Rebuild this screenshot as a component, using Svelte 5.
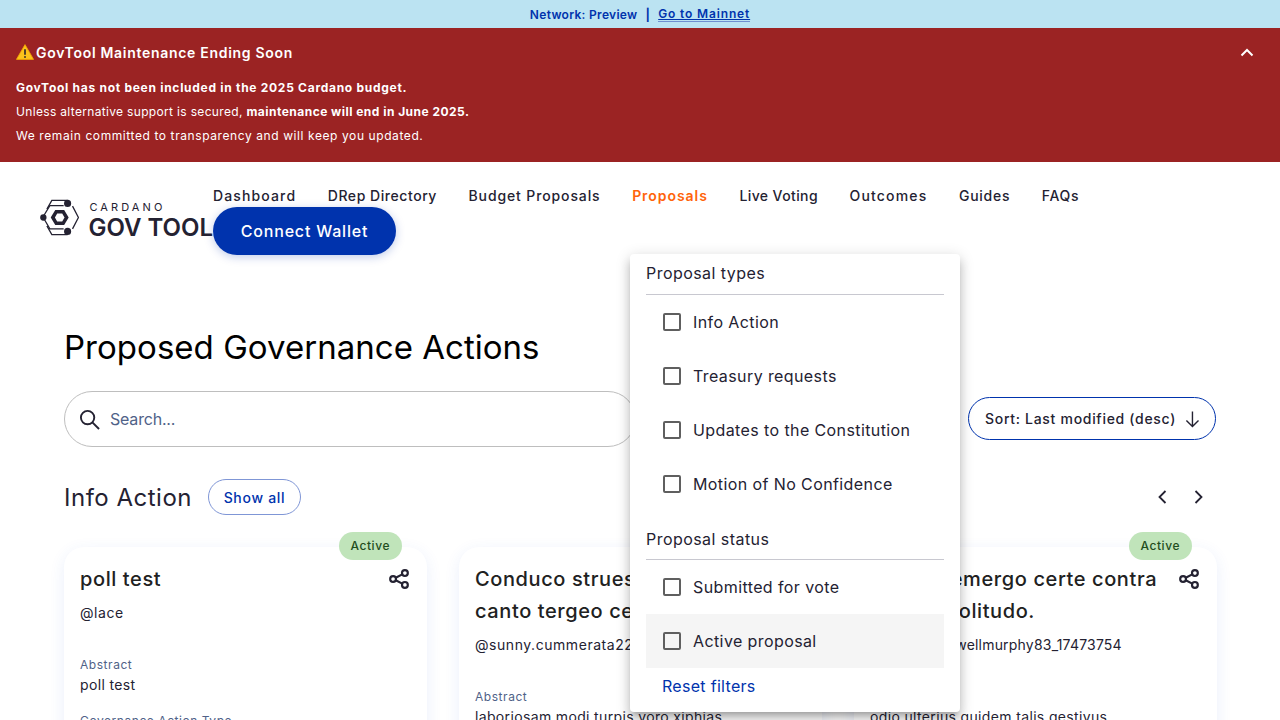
<script lang="ts">
	// tracking evens out the width gap between Inter and the original typeface
	const navLinks = [
		{ label: 'Dashboard', tracking: 1.13 },
		{ label: 'DRep Directory', tracking: 0.55 },
		{ label: 'Budget Proposals', tracking: 0.88 },
		{ label: 'Proposals', tracking: 0.95 },
		{ label: 'Live Voting', tracking: 0.4 },
		{ label: 'Outcomes', tracking: 1.15 },
		{ label: 'Guides', tracking: 0.75 },
		{ label: 'FAQs', tracking: 0.65 }
	];
	const typeFilters = ['Info Action', 'Treasury requests', 'Updates to the Constitution', 'Motion of No Confidence'];
	const statusFilters = ['Submitted for vote', 'Active proposal'];

	const cards = [
		{ title: ['poll test'], author: '@lace', authorTracking: 0.55, abstract: 'poll test', badge: true },
		{ title: ['Conduco strues tempus', 'canto tergeo cena'], author: '@sunny.cummerata22_17473754', authorTracking: 0.55, abstract: 'laboriosam modi turpis voro xiphias', badge: false },
		{ title: ['Vicinus emergo certe contra', 'Amoris solitudo.'], author: '@arden.maxwellmurphy83_17473754', authorTracking: 0.2, abstract: 'odio ulterius quidem talis gestivus', badge: true }
	];
</script>

<div class="page">
	<div class="network">
		<span>Network: Preview</span>
		<span class="sep">|</span>
		<a href="#mainnet">Go to Mainnet</a>
	</div>

	<section class="notice">
		<div class="notice-head">
			<h2>
				<svg class="warn" viewBox="0 0 18 16" width="18" height="16" aria-hidden="true">
					<path d="M9 .6 17.6 15.4H.4Z" fill="#fcc21b" stroke="#f2a600" stroke-width=".8" stroke-linejoin="round" />
					<rect x="8.1" y="5" width="1.8" height="6" rx=".9" fill="#40342a" />
					<circle cx="9" cy="13" r="1" fill="#40342a" />
				</svg>
				GovTool Maintenance Ending Soon
			</h2>
			<svg viewBox="0 0 14 9" width="14" height="9" fill="none" stroke="#fff" stroke-width="2" aria-hidden="true">
				<path d="M1.5 7.5 7 2l5.5 5.5" />
			</svg>
		</div>
		<p class="lead"><b>GovTool has not been included in the 2025 Cardano budget.</b></p>
		<p>Unless alternative support is secured, <b>maintenance will end in June 2025.</b></p>
		<p class="last">We remain committed to transparency and will keep you updated.</p>
	</section>

	<header>
		<div class="logo">
			<svg viewBox="0 0 40 37" width="40" height="37" fill="none" stroke="#242232" aria-hidden="true">
				<path d="M7 10 12 1.2H28M33 7 39 18.5 33 30M28 35.8H12L7 27" stroke-width="1.3" />
				<path d="M3 18 10 6.5H24M3 18 10 30H24" stroke-width="1.3" />
				<path d="M13 18.5 16.5 12.6h7l3.5 5.9-3.5 5.9h-7Z" stroke="#fff" stroke-width="7" />
				<path d="M13 18.5 16.5 12.6h7l3.5 5.9-3.5 5.9h-7Z" stroke-width="3.6" />
				<circle cx="28" cy="4.2" r="3.6" fill="#242232" stroke="none" />
				<circle cx="3.4" cy="18.5" r="3.2" fill="#242232" stroke="none" />
				<circle cx="28" cy="32.6" r="3.6" fill="#242232" stroke="none" />
			</svg>
			<div class="wordmark">
				<span class="small">CARDANO</span>
				<span class="big">GOV TOOL</span>
			</div>
		</div>
		<nav>
			{#each navLinks as link}
				<a href="#nav" class:active={link.label === 'Proposals'} style:letter-spacing="{link.tracking}px">{link.label}</a>
			{/each}
			<button class="connect">Connect Wallet</button>
		</nav>
	</header>

	<main>
		<h1>Proposed Governance Actions</h1>

		<div class="toolbar">
			<label class="search">
				<svg viewBox="0 0 22 22" width="21" height="21" fill="none" stroke="#242232" stroke-width="2" aria-hidden="true">
					<circle cx="9" cy="9" r="7" />
					<path d="m14 14 7 7" />
				</svg>
				<input placeholder="Search..." />
			</label>
			<button class="sort">
				Sort: Last modified (desc)
				<svg viewBox="0 0 16 18" width="16" height="18" fill="none" stroke="#242232" stroke-width="1.5" aria-hidden="true">
					<path d="M8 1v16M1.5 10.5 8 17l6.5-6.5" />
				</svg>
			</button>
		</div>

		<div class="section-head">
			<h3>Info Action</h3>
			<button class="show-all">Show all</button>
			<div class="arrows">
				<svg viewBox="0 0 9 14" width="9" height="14" fill="none" stroke="#242232" stroke-width="1.8" aria-hidden="true"><path d="M7.5 1 1.5 7l6 6" /></svg>
				<svg viewBox="0 0 9 14" width="9" height="14" fill="none" stroke="#242232" stroke-width="1.8" aria-hidden="true"><path d="m1.5 1 6 6-6 6" /></svg>
			</div>
		</div>

		<div class="cards">
			{#each cards as card}
				<article>
					{#if card.badge}<span class="badge">Active</span>{/if}
					<div class="card-head">
						<h4>{#each card.title as line}<span>{line}</span>{/each}</h4>
						<svg class="share" viewBox="0 0 22 22" width="20" height="20" fill="none" stroke="#242232" stroke-width="2.4" aria-hidden="true">
							<circle cx="17.5" cy="4.5" r="3.2" />
							<circle cx="4.5" cy="11" r="3.2" />
							<circle cx="17.5" cy="17.5" r="3.2" />
							<path d="m7.4 9.6 7.2-3.7M7.4 12.4l7.2 3.7" />
						</svg>
					</div>
					<p class="author" style:letter-spacing="{card.authorTracking}px">{card.author}</p>
					<p class="label">Abstract</p>
					<p class="value">{card.abstract}</p>
					<p class="label next">Governance Action Type</p>
					<p class="value">Info Action</p>
				</article>
			{/each}
		</div>
	</main>

	<div class="filters">
		<p class="filter-title">Proposal types</p>
		{#each typeFilters as item}
			<div class="filter-row"><i></i>{item}</div>
		{/each}
		<p class="filter-title second">Proposal status</p>
		{#each statusFilters as item}
			<div class="filter-row" class:hover={item === 'Active proposal'}><i></i>{item}</div>
		{/each}
		<button class="reset">Reset filters</button>
	</div>
</div>

<style>
	:global(body) {
		background: #fff;
		overflow: hidden;
	}

	.page {
		position: relative;
		height: 720px;
		overflow: hidden;
		color: #242232;
		font-family: Inter, 'Noto Sans', sans-serif;
	}

	p, h1, h2, h3, h4 {
		margin: 0;
	}

	button {
		font-family: inherit;
		background: none;
		cursor: pointer;
	}

	.network {
		display: flex;
		justify-content: center;
		align-items: center;
		gap: 8px;
		height: 28px;
		background: #bbe3f2;
		color: #0033ad;
		font-size: 12px;
		font-weight: 600;
		letter-spacing: 0.3px;
	}

	.network a {
		color: inherit;
		letter-spacing: 0.85px;
		border-bottom: 1px solid #6f8fd0;
		line-height: 14px;
	}

	.network .sep {
		font-weight: 700;
	}

	.notice {
		height: 134px;
		box-sizing: border-box;
		padding: 14px 16px 0;
		background: #9b2323;
		color: #fff;
		font-size: 12px;
		letter-spacing: 0.33px;
	}

	.notice-head {
		display: flex;
		justify-content: space-between;
		align-items: center;
		height: 20px;
		padding-right: 10px;
		margin-bottom: 14px;
	}

	.notice h2 {
		display: flex;
		align-items: center;
		gap: 2px;
		font-size: 14px;
		font-weight: 600;
		letter-spacing: 0.7px;
	}

	.notice p {
		line-height: 24px;
		font-weight: 400;
	}

	.notice b {
		font-weight: 700;
		letter-spacing: 0.47px;
	}

	.notice .lead b {
		letter-spacing: 0.72px;
	}

	.notice .last {
		letter-spacing: 0.59px;
	}

	header {
		display: flex;
		align-items: center;
		padding: 23px 40px 0;
	}

	.logo {
		display: flex;
		gap: 9px;
		flex: 0 0 173px;
		min-width: 0;
		margin-top: -1px;
	}

	.wordmark {
		display: flex;
		flex-direction: column;
	}

	.small {
		font-size: 11px;
		line-height: 13px;
		letter-spacing: 3.1px;
		margin-left: 1px;
		margin-top: 2px;
	}

	.big {
		font-size: 24px;
		line-height: 27px;
		font-weight: 600;
		white-space: nowrap;
	}

	nav {
		display: flex;
		flex-wrap: wrap;
		flex: 1;
		column-gap: 31.6px;
	}

	nav a {
		color: #242232;
		text-decoration: none;
		font-size: 14px;
		line-height: 22px;
		font-weight: 500;
	}

	nav a.active {
		color: #ff640a;
		font-weight: 600;
	}

	.connect {
		width: 183px;
		height: 48px;
		border: 0;
		border-radius: 24px;
		background: #0033ad;
		color: #fff;
		font-size: 16px;
		font-weight: 500;
		letter-spacing: 0.8px;
		box-shadow: 0 2px 10px rgba(0, 51, 173, 0.25);
	}

	main {
		padding: 72px 64px 0;
	}

	h1 {
		font-size: 33px;
		line-height: 40px;
		font-weight: 400;
		color: #000;
		letter-spacing: 0.03px;
	}

	.toolbar {
		display: flex;
		justify-content: space-between;
		align-items: flex-start;
		margin-top: 24px;
	}

	.search {
		display: flex;
		align-items: center;
		gap: 8px;
		box-sizing: border-box;
		width: 572px;
		height: 56px;
		padding-left: 14px;
		border: 1px solid #bebebe;
		border-radius: 28px;
	}

	.search input {
		flex: 1;
		border: 0;
		outline: 0;
		font: inherit;
		font-size: 16px;
		letter-spacing: -0.2px;
	}

	.search input::placeholder {
		color: #506288;
		opacity: 1;
	}

	.sort {
		display: flex;
		align-items: center;
		gap: 9px;
		box-sizing: border-box;
		width: 248px;
		height: 43px;
		margin-top: 6px;
		padding: 0 15px 0 16px;
		border: 1px solid #0033ad;
		border-radius: 22px;
		color: #242232;
		font-size: 14px;
		font-weight: 500;
		letter-spacing: 0.7px;
		white-space: nowrap;
	}

	.section-head {
		display: flex;
		align-items: center;
		gap: 16px;
		height: 36px;
		margin-top: 32px;
	}

	h3 {
		font-size: 24px;
		font-weight: 400;
		letter-spacing: 0.5px;
	}

	.show-all {
		width: 93px;
		height: 36px;
		border: 1px solid #7f96d6;
		border-radius: 18px;
		color: #0033ad;
		font-size: 14px;
		font-weight: 500;
		letter-spacing: 0.7px;
	}

	.arrows {
		display: flex;
		gap: 27px;
		margin-left: auto;
		margin-right: 13px;
	}

	.cards {
		display: grid;
		grid-template-columns: repeat(3, 363px);
		gap: 32px;
		margin-top: 32px;
	}

	article {
		position: relative;
		height: 320px;
		box-sizing: border-box;
		padding: 16px;
		border-radius: 20px;
		background: #fff;
		box-shadow: 0 4px 15px rgba(47, 98, 220, 0.1);
	}

	.badge {
		position: absolute;
		top: -15px;
		right: 25px;
		padding: 0 12px;
		height: 28px;
		line-height: 28px;
		border-radius: 14px;
		background: #c0e4ba;
		color: #1f4d20;
		font-size: 12px;
		font-weight: 500;
		letter-spacing: 0.55px;
	}

	.card-head {
		display: flex;
		justify-content: space-between;
		align-items: flex-start;
		gap: 12px;
	}

	h4 {
		font-size: 20px;
		line-height: 32px;
		font-weight: 500;
		color: #212121;
		letter-spacing: 0.6px;
	}

	h4 span {
		display: block;
		white-space: nowrap;
	}

	.share {
		flex: none;
		margin: 6px 2px 0 0;
	}

	.author {
		margin-top: 8px;
		font-size: 14px;
		line-height: 20px;
	}

	.label {
		margin-top: 33px;
		font-size: 12px;
		line-height: 18px;
		color: #506288;
		letter-spacing: 0.55px;
	}

	.label.next {
		margin-top: 17px;
	}

	.value {
		margin-top: 1px;
		font-size: 14px;
		line-height: 20px;
		letter-spacing: 0.35px;
	}

	.filters {
		position: absolute;
		top: 254px;
		left: 630px;
		width: 330px;
		height: 458px;
		box-sizing: border-box;
		padding: 7px 16px 0;
		border-radius: 4px;
		background: #fff;
		box-shadow: 0 5px 5px -3px rgba(0, 0, 0, 0.2), 0 8px 10px 1px rgba(0, 0, 0, 0.14), 0 3px 14px 2px rgba(0, 0, 0, 0.12);
	}

	.filter-title {
		height: 33px;
		font-size: 16px;
		line-height: 24px;
		border-bottom: 1px solid #c8c8d0;
		letter-spacing: 0.45px;
	}

	.filter-title.second {
		height: 32px;
		margin-top: 16px;
	}

	.filter-row {
		display: flex;
		align-items: center;
		gap: 12px;
		height: 54px;
		padding-left: 17px;
		font-size: 16px;
		letter-spacing: 0.4px;
	}

	.filter-row.hover {
		background: #f5f5f5;
	}

	.filter-row i {
		box-sizing: border-box;
		width: 18px;
		height: 18px;
		border: 2px solid #5f5f5f;
		border-radius: 2px;
	}

	.reset {
		display: block;
		margin: 6px 0 0 16px;
		padding: 0;
		border: 0;
		color: #0033ad;
		font-size: 16px;
		line-height: 24px;
		letter-spacing: 0.3px;
	}
</style>
